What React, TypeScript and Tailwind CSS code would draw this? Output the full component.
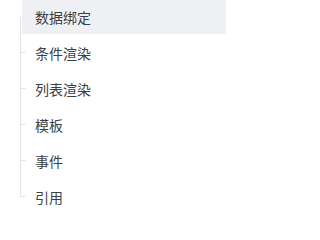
const items = ['数据绑定', '条件渲染', '列表渲染', '模板', '事件', '引用'];

export default function App() {
  return (
    <div className="w-[226px] h-[213px] bg-white overflow-hidden" style={{ fontFamily: '"Noto Sans CJK SC", "Noto Sans", sans-serif' }}>
      <ul className="-mt-px pl-[20px]">
        {items.map((label, i) => {
          const first = i === 0;
          const last = i === items.length - 1;
          return (
            <li key={label} className="relative flex h-[36px]">
              {!first && <span className="absolute left-0 top-0 h-[18px] w-px bg-[#e2e4e9]" />}
              {!last && <span className="absolute left-0 top-[18px] h-[18px] w-px bg-[#e2e4e9]" />}
              {!first && <span className="absolute left-0 top-[17px] h-px w-[6px] bg-[#e2e4e9]" />}
              <div
                className={
                  'ml-[2px] flex flex-1 items-center pl-[13px] text-[14px] leading-none text-[#3b3f46] ' +
                  (first ? 'h-[35px] bg-[#eff0f3]' : '')
                }
              >
                {label}
              </div>
            </li>
          );
        })}
      </ul>
    </div>
  );
}
